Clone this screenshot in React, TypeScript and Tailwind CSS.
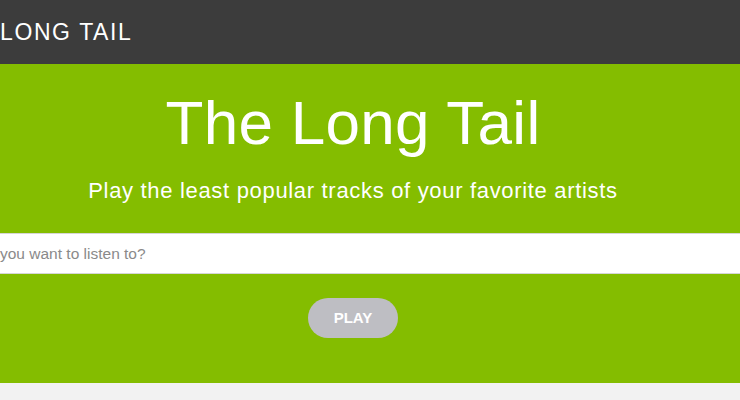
export default function App() {
  return (
    <div className="min-h-[400px] bg-[#f2f2f2] font-['Liberation_Sans',Arial,sans-serif] overflow-hidden">
      <header className="h-16 bg-[#3c3c3c] flex items-center">
        <span className="text-white text-[23px] tracking-[1.6px] leading-none mt-[1px]">LONG TAIL</span>
      </header>

      <section className="bg-[#84bd00] h-[319px] w-full">
        <div className="w-[706px] flex flex-col items-center">
          <h1 className="text-white text-[62px] tracking-[0.3px] leading-none mt-[28px]">The Long Tail</h1>
          <p className="text-white text-[22px] tracking-[0.68px] leading-none mt-[26px]">
            Play the least popular tracks of your favorite artists
          </p>
        </div>
        <input
          type="text"
          placeholder="you want to listen to?"
          className="block w-full h-[41px] mt-[31px] bg-white border-y border-[#d6d6d6] text-[15.5px] placeholder:text-[#8a8a8a] outline-none"
        />
        <div className="w-[706px] flex justify-center mt-[24px]">
          <button className="w-[90px] h-10 rounded-full bg-[#bebec3] text-white text-[15px] font-bold">
            PLAY
          </button>
        </div>
      </section>
    </div>
  );
}
